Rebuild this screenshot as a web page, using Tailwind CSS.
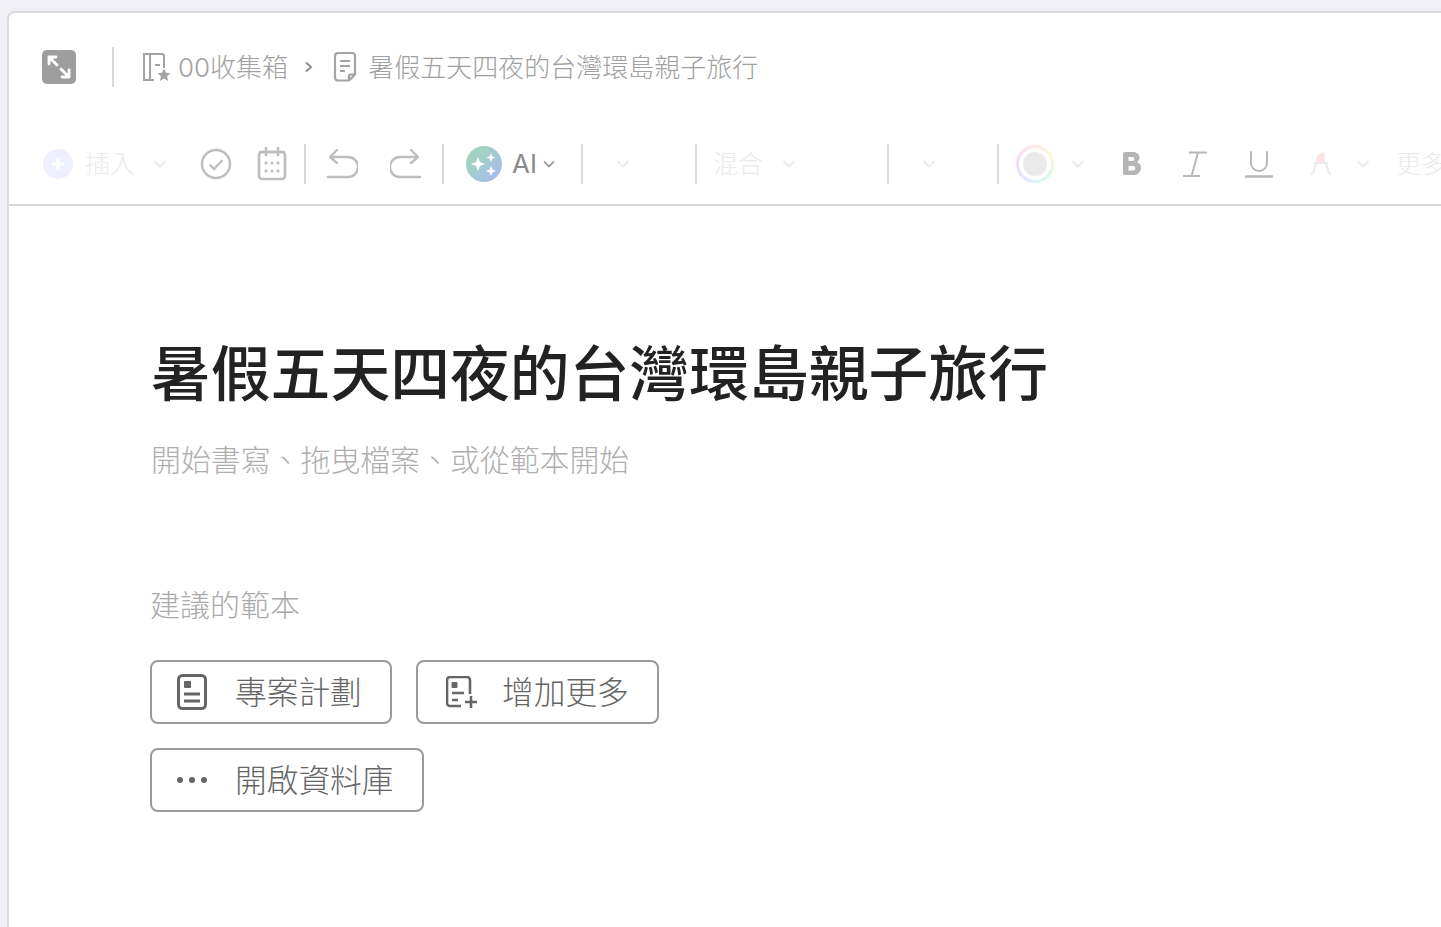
<!DOCTYPE html>
<html lang="zh-TW">
<head>
<meta charset="utf-8">
<script src="https://cdn.jsdelivr.net/npm/@tailwindcss/browser@4"></script>
</head>
<body class="m-0 h-[927px] w-[1441px] overflow-hidden bg-[#f0eff6] font-['Inter','Noto_Sans_CJK_TC',sans-serif]">
<div class="pl-[7px] pt-[11px] h-full">
  <div class="h-[916px] rounded-tl-lg border-l-2 border-t-2 border-[#dcdcdf] bg-white overflow-hidden">
    <!-- breadcrumb -->
    <div class="flex h-[110px] items-center pb-[3px] pl-[33px]">
      <div class="flex h-[34px] w-[34px] items-center justify-center rounded-[5px] bg-[#9e9e9e]">
        <svg width="28" height="28" viewBox="0 0 28 28" fill="none" stroke="#fff" stroke-width="2.800" stroke-linecap="round" stroke-linejoin="round"><path d="M4 11V4h7M4 4l8 8M24 17v7h-7M24 24l-8-8"/></svg>
      </div>
      <div class="ml-[36px] h-[40px] w-[2px] bg-[#dadada]"></div>
      <svg class="ml-[28px] mt-[2px]" width="30" height="32" viewBox="0 0 30 32" fill="none" stroke="#a3a3a3" stroke-width="2"><path d="M12 28H2V2h18a2 2 0 0 1 2 2v12M8 3v25M13 13h5"/><path d="M22 16.500l2 4.300 4.500.5-3.400 3 1 4.600-4.100-2.400-4.100 2.400 1-4.600-3.400-3 4.500-.5z" fill="#a3a3a3" stroke="none"/></svg>
      <span class="ml-[6px] pt-[2px] text-[26px] leading-none text-[#a0a0a0] font-light">00收集箱</span>
      <svg class="ml-[15px]" width="12" height="14" viewBox="0 0 12 14" fill="none" stroke="#8f8f8f" stroke-width="2"><path d="M3 2.500l5 4.500-5 4.500"/></svg>
      <svg class="ml-[17px]" width="26" height="32" viewBox="0 0 26 32" fill="none" stroke="#a3a3a3" stroke-width="2.200" stroke-linejoin="round"><path d="M17 29.500H6a3 3 0 0 1-3-3V5a3 3 0 0 1 3-3h14a3 3 0 0 1 3 3v18.500zM17 29.500V25a1.500 1.500 0 0 1 1.500-1.500H23"/><path d="M8 10h10M8 15h10M8 20h5"/></svg>
      <span class="ml-[10px] pt-[2px] text-[26px] leading-none text-[#a0a0a0] font-light">暑假五天四夜的台灣環島親子旅行</span>
    </div>
    <!-- toolbar -->
    <div class="flex h-[83px] items-start border-b-2 border-[#d8d8d8] pt-[21px]">
      <div class="flex h-[40px] w-[1440px] shrink-0 items-center">
        <div class="ml-[34px] flex h-[30px] w-[30px] items-center justify-center rounded-full bg-[#eff0fd]">
          <svg width="14" height="14" viewBox="0 0 14 14" stroke="#fff" stroke-width="3"><path d="M7 1v12M1 7h12"/></svg>
        </div>
        <span class="ml-[12px] text-[25px] leading-none text-[#ebebeb] font-light">插入</span>
        <svg class="ml-[18px]" width="14" height="10" viewBox="0 0 14 10" fill="none" stroke="#ececec" stroke-width="2"><path d="M1.500 2l5.500 5.500L12.500 2"/></svg>
        <svg class="ml-[33px]" width="32" height="32" viewBox="0 0 32 32" fill="none" stroke="#bdbdbd" stroke-width="2.400"><circle cx="16" cy="16" r="14"/><path d="M9.500 16.500l4.500 4.500 8.500-9"/></svg>
        <svg class="ml-[25px]" width="30" height="34" viewBox="0 0 30 34" fill="none" stroke="#bdbdbd" stroke-width="2.600"><rect x="2" y="5" width="26" height="27" rx="3"/><path d="M2 5h26M9 0v9M21 0v9"/><g fill="#bdbdbd" stroke="none"><circle cx="9" cy="16" r="1.600"/><circle cx="15" cy="16" r="1.600"/><circle cx="21" cy="16" r="1.600"/><circle cx="9" cy="24" r="1.600"/><circle cx="15" cy="24" r="1.600"/><circle cx="21" cy="24" r="1.600"/></g></svg>
        <div class="ml-[17px] h-[40px] w-[2px] bg-[#dadada]"></div>
        <svg class="ml-[20px]" width="32" height="32" viewBox="0 0 32 32" fill="none" stroke="#bdbdbd" stroke-width="2.400" stroke-linecap="round" stroke-linejoin="round"><path d="M11 2L4 9l7 6M5 9h17a7.500 7.500 0 0 1 0 20H2"/></svg>
        <svg class="ml-[32px]" width="32" height="32" viewBox="0 0 32 32" fill="none" stroke="#bdbdbd" stroke-width="2.400" stroke-linecap="round" stroke-linejoin="round"><path d="M21 2l7 7-7 6M27 9H10a7.500 7.500 0 0 0 0 20h20"/></svg>
        <div class="ml-[20px] h-[40px] w-[2px] bg-[#dadada]"></div>
        <svg class="ml-[22px]" width="36" height="36" viewBox="0 0 36 36"><defs><linearGradient id="ai" x1="0" y1="0" x2="1" y2="1"><stop offset="0" stop-color="#9fdcb0"/><stop offset="1" stop-color="#a9b8f5"/></linearGradient></defs><circle cx="18" cy="18" r="18" fill="url(#ai)"/><g fill="#fff"><path d="M12 11l2 5 5 2-5 2-2 5-2-5-5-2 5-2z"/><path d="M25 7l1.300 3.200 3.200 1.300-3.200 1.300-1.300 3.200-1.300-3.200-3.200-1.300 3.200-1.300z"/><path d="M25 20l1.500 3.500 3.500 1.500-3.500 1.500-1.500 3.500-1.500-3.500-3.500-1.500 3.500-1.500z"/></g></svg>
        <span class="ml-[10px] text-[26px] leading-none text-[#8a8a8a]">AI</span>
        <svg class="ml-[6px]" width="12" height="8" viewBox="0 0 12 8" fill="none" stroke="#8a8a8a" stroke-width="1.500"><path d="M1 1.500l5 5 5-5"/></svg>
        <div class="ml-[26px] h-[40px] w-[2px] bg-[#dadada]"></div>
        <svg class="ml-[33px]" width="14" height="10" viewBox="0 0 14 10" fill="none" stroke="#ececec" stroke-width="2"><path d="M1.500 2l5.500 5.500L12.500 2"/></svg>
        <div class="ml-[65px] h-[40px] w-[2px] bg-[#dadada]"></div>
        <span class="ml-[16px] text-[25px] leading-none text-[#ebebeb] font-light">混合</span>
        <svg class="ml-[19px]" width="14" height="10" viewBox="0 0 14 10" fill="none" stroke="#ececec" stroke-width="2"><path d="M1.500 2l5.500 5.500L12.500 2"/></svg>
        <div class="ml-[91px] h-[40px] w-[2px] bg-[#dadada]"></div>
        <svg class="ml-[33px]" width="14" height="10" viewBox="0 0 14 10" fill="none" stroke="#ececec" stroke-width="2"><path d="M1.500 2l5.500 5.500L12.500 2"/></svg>
        <div class="ml-[61px] h-[40px] w-[2px] bg-[#dadada]"></div>
        <div class="ml-[17px] flex h-[38px] w-[38px] items-center justify-center rounded-full bg-[conic-gradient(#fde8e8,#fdf7d8,#ddf8df,#d9f3fb,#e5dcfb,#fbdcf0,#fde8e8)]">
          <div class="flex h-[32px] w-[32px] items-center justify-center rounded-full bg-white"><div class="h-[24px] w-[24px] rounded-full bg-[#eaeaea]"></div></div>
        </div>
        <svg class="ml-[17px]" width="14" height="10" viewBox="0 0 14 10" fill="none" stroke="#ececec" stroke-width="2"><path d="M1.500 2l5.500 5.500L12.500 2"/></svg>
        <svg class="ml-[37px]" width="20" height="26" viewBox="0 0 20 26"><path fill-rule="evenodd" d="M3 1h8c4 0 6.500 2.300 6.500 5.800 0 2-1 3.500-2.500 4.400 2.500.9 4 2.900 4 5.600 0 4-3 7.200-7.200 7.200H3a2 2 0 0 1-2-2V3a2 2 0 0 1 2-2zm3.500 5v4h4c1.200 0 1.800-.9 1.800-2s-.6-2-1.800-2zm0 9v4.500h4.500c1.500 0 2.300-1 2.300-2.200s-.8-2.300-2.300-2.300z" fill="#b5b5b5"/></svg>
        <svg class="ml-[40px]" width="26" height="26" viewBox="0 0 26 26" fill="none" stroke="#b8b8b8" stroke-width="2"><path d="M7 1.500h18M16 1.500L9.500 25M1 25h17"/></svg>
        <svg class="ml-[37px]" width="28" height="28" viewBox="0 0 28 28" fill="none" stroke="#b8b8b8"><path stroke-width="2" stroke-linecap="round" d="M6 2v11a8 8 0 0 0 16 0V2"/><path stroke-width="2.400" d="M0 26.500h28"/></svg>
        <svg class="ml-[37px]" width="22" height="26" viewBox="0 0 22 26" fill="none"><path d="M6 12l1-8 7-3 1 11z" fill="#fde3e3"/><path d="M4 12h14M6.500 12L3 22l-2 1M15.500 12L19 22l2 1" stroke="#ececec" stroke-width="2.200"/></svg>
        <svg class="ml-[24px]" width="14" height="10" viewBox="0 0 14 10" fill="none" stroke="#ececec" stroke-width="2"><path d="M1.500 2l5.500 5.500L12.500 2"/></svg>
        <span class="ml-[26px] text-[25px] leading-none text-[#ebebeb] font-light whitespace-nowrap">更多</span>
      </div>
    </div>
    <!-- body -->
    <div class="pl-[141px]">
      <h1 class="mt-[139px] ml-[1px] text-[59.800px] leading-none font-medium text-[#222222] whitespace-nowrap">暑假五天四夜的台灣環島親子旅行</h1>
      <p class="mt-[41px] ml-[1px] text-[29.900px] leading-none font-light text-[#aeaeae]">開始書寫、拖曳檔案、或從範本開始</p>
      <p class="mt-[114px] text-[30px] leading-none font-light text-[#aaaaaa]">建議的範本</p>
      <div class="mt-[40px] flex gap-[24px]">
        <div class="flex h-[64px] w-[242px] items-center rounded-lg border-2 border-[#9a9a9a] pl-[25px]">
          <svg width="30" height="36" viewBox="0 0 30 36" fill="none" stroke="#666" stroke-width="3"><rect x="1.500" y="1.500" width="27" height="33" rx="4"/><rect x="7" y="7" width="7" height="7" rx="1" fill="#666" stroke="none"/><path d="M7 20h16M7 27h16"/></svg>
          <span class="ml-[28px] pt-[2px] text-[31.700px] leading-none font-light text-[#666]">專案計劃</span>
        </div>
        <div class="flex h-[64px] w-[243px] items-center rounded-lg border-2 border-[#9a9a9a] pl-[28px]">
          <svg width="32" height="32" viewBox="0 0 32 32" fill="none" stroke="#666" stroke-width="2.600"><path d="M15 30H4a3 3 0 0 1-3-3V4a3 3 0 0 1 3-3h17a3 3 0 0 1 3 3v14"/><rect x="5.500" y="6" width="6" height="6" rx="1" fill="#666" stroke="none"/><path d="M6 17h12M6 24h6"/><path d="M25 20v12M19 26h12" stroke-width="2.600"/></svg>
          <span class="ml-[24px] pt-[2px] text-[31.700px] leading-none font-light text-[#666]">增加更多</span>
        </div>
      </div>
      <div class="mt-[24px] flex h-[64px] w-[274px] items-center rounded-lg border-2 border-[#9a9a9a] pl-[25px]">
        <svg width="30" height="6" viewBox="0 0 30 6" fill="#666"><circle cx="3" cy="3" r="3"/><circle cx="15" cy="3" r="3"/><circle cx="27" cy="3" r="3"/></svg>
        <span class="ml-[28px] pt-[2px] text-[31.700px] leading-none font-light text-[#666]">開啟資料庫</span>
      </div>
    </div>
  </div>
</div>
</body>
</html>
